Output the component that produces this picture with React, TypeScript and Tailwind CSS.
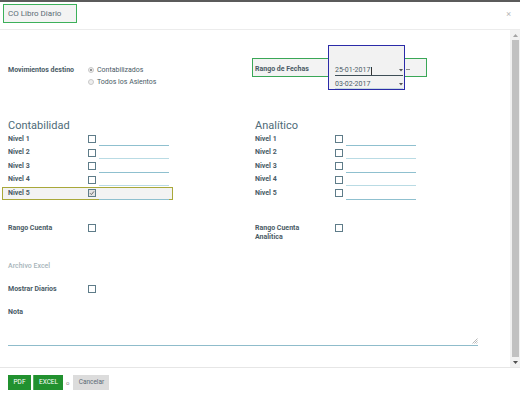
import React from 'react';

const label = 'text-[7px] font-bold text-[#4a5b66]';

const Check = ({ checked = false }: { checked?: boolean }) => (
    <span
        className={`w-[8px] h-[8px] border border-[#5e7c89] flex items-center justify-center shrink-0 ${
            checked ? 'bg-[#e2e2e2]' : 'bg-white'
        }`}
    >
        {checked && (
            <svg width="6" height="6" viewBox="0 0 6 6">
                <path d="M1 3.2 L2.4 4.6 L5 1.4" stroke="#6b6b6b" strokeWidth="1" fill="none" />
            </svg>
        )}
    </span>
);

const Arrow = () => (
    <svg width="4" height="3" viewBox="0 0 4 3" className="shrink-0">
        <path d="M0 0 H4 L2 2.5 Z" fill="#555" />
    </svg>
);

const Radio = ({ checked, text }: { checked?: boolean; text: string }) => (
    <div className="flex items-center h-[12px]">
        <span className="w-[6px] h-[6px] rounded-full border border-[#c9c9c9] bg-[#efefef] flex items-center justify-center">
            {checked && <span className="w-[2px] h-[2px] rounded-full bg-[#777]" />}
        </span>
        <span className="ml-[3px] text-[7px] text-[#4a5b66]">{text}</span>
    </div>
);

const LevelRow = ({ n, highlight = false }: { n: number; highlight?: boolean }) => (
    <div
        className={`flex items-center h-[13.5px] ${
            highlight ? '-ml-[6px] pl-[5px] w-[171px] border border-[#a9a83a] bg-[#f3f3f3]' : ''
        }`}
    >
        <span className={`${label} w-[80px] leading-[9px]`}>Nivel {n}</span>
        <Check checked={highlight} />
        <span className={`ml-[3px] w-[70px] h-[12.5px] border-b ${n % 2 ? 'border-[#8fc0cf]' : 'border-[#b9dbe4]'}`} />
    </div>
);

const Section = ({ title, highlight }: { title: string; highlight?: boolean }) => (
    <div className="flex flex-col">
        <div className="h-[13.5px] text-[11px] leading-[13.5px] text-[#4e6b78]">{title}</div>
        {[1, 2, 3, 4, 5].map((n) => (
            <LevelRow key={n} n={n} highlight={highlight && n === 5} />
        ))}
    </div>
);

const App: React.FC = () => {
    return (
        <div className="w-[520px] h-[397px] bg-white flex flex-col overflow-hidden font-['Roboto',sans-serif]">
            <div className="h-[2px] bg-[#5b5b5b]" />
            <div className="h-[28px] border-b border-[#ececec] flex items-start justify-between">
                <div className="mt-[2px] ml-[3px] w-[74px] h-[19px] border border-[#3cb05a] bg-[#f3f3f3] flex items-center pl-[4px] text-[8px] text-[#5c6c75]">
                    CO Libro Diario
                </div>
                <span className="mt-[6px] mr-[9px] text-[9px] text-[#b8b8b8]">×</span>
            </div>

            <div className="h-[337px] flex">
                <div className="flex-1 flex flex-col pl-[8px]">
                    <div className="mt-[15px] grid grid-cols-[244px_1fr]">
                        <div className="pt-[19px] flex">
                            <span className={`${label} w-[80px] leading-[12px]`}>Movimientos destino</span>
                            <div className="flex flex-col">
                                <Radio checked text="Contabilizados" />
                                <Radio text="Todos los Asientos" />
                            </div>
                        </div>
                        <div className="relative h-[45px]">
                            <div className="mt-[13px] w-[175px] h-[19px] border border-[#3aa757] bg-[#f3f3f3] flex items-end pb-[2px]">
                                <span className={`${label} pl-[2px] w-[77px] leading-[9px]`}>Rango de Fechas</span>
                                <span className="w-[76px]" />
                                <span className="w-[4px] h-px bg-[#8a8a8a] mb-[4px]" />
                            </div>
                            <div className="absolute left-[76px] top-0 w-[77px] h-[45px] border border-[#2b2ba8] bg-[#f2f2f2] flex flex-col pl-[6px] pr-[1px] pt-[20px]">
                                <div className="h-[10px] border-b border-[#3e4e57] flex items-center justify-between text-[7px] leading-[9px] text-[#4a5b66]">
                                    <span className="flex items-center">
                                        25-01-2017
                                        <span className="inline-block w-px h-[8px] bg-[#333] ml-px" />
                                    </span>
                                    <Arrow />
                                </div>
                                <div className="h-[13px] border-b border-[#c5d9df] flex items-center pt-[4px] justify-between text-[7px] leading-[9px] text-[#4a5b66]">
                                    <span>03-02-2017</span>
                                    <Arrow />
                                </div>
                            </div>
                        </div>
                    </div>

                    <div className="mt-[29px] grid grid-cols-[244px_1fr]">
                        <Section title="Contabilidad" highlight />
                        <div className="pl-[3px]">
                            <Section title="Analítico" />
                        </div>
                    </div>

                    <div className="mt-[23.5px] grid grid-cols-[244px_1fr]">
                        <div className="flex items-start">
                            <span className={`${label} w-[80px] leading-[9px]`}>Rango Cuenta</span>
                            <span className="mt-[0.5px]">
                                <Check />
                            </span>
                        </div>
                        <div className="pl-[3px] flex items-start">
                            <span className={`${label} w-[80px] leading-[9px]`}>
                                Rango Cuenta
                                <br />
                                Analítica
                            </span>
                            <span className="mt-[0.5px]">
                                <Check />
                            </span>
                        </div>
                    </div>

                    <div className="mt-[20px] text-[7px] leading-[9px] font-medium text-[#a7b4ba]">Archivo Excel</div>

                    <div className="mt-[14px] flex items-center h-[9px]">
                        <span className={`${label} w-[80px] leading-[9px]`}>Mostrar Diarios</span>
                        <Check />
                    </div>

                    <div className={`mt-[14px] ${label} leading-[9px]`}>Nota</div>

                    <div className="mt-[0.5px] w-[470px] h-[29px] border-b border-[#8fbccb] flex items-end justify-end">
                        <svg width="6" height="6" viewBox="0 0 6 6" className="mb-[1px]">
                            <path d="M0.5 5.5 L5.5 0.5 M2.5 5.5 L5.5 2.5 M4.5 5.5 L5.5 4.5" stroke="#999" strokeWidth="0.7" />
                        </svg>
                    </div>
                </div>

                <div className="w-[10px] bg-[#f1f1f1] flex flex-col items-center">
                    <div className="h-[10px] flex items-center justify-center">
                        <svg width="5" height="3" viewBox="0 0 5 3">
                            <path d="M0 3 H5 L2.5 0 Z" fill="#a3a3a3" />
                        </svg>
                    </div>
                    <div className="w-[7px] flex-1 bg-[#c1c1c1]" />
                    <div className="h-[10px] flex items-center justify-center">
                        <svg width="5" height="3" viewBox="0 0 5 3">
                            <path d="M0 0 H5 L2.5 3 Z" fill="#505050" />
                        </svg>
                    </div>
                </div>
            </div>

            <div className="h-[30px] border-t border-[#e6e6e6] flex items-start pt-[7px] pl-[8px]">
                <button className="w-[23px] h-[15px] bg-[#21912f] text-white text-[6.5px]">PDF</button>
                <button className="ml-[2px] w-[30px] h-[15px] bg-[#21912f] border-l border-[#56ad61] text-white text-[6.5px]">
                    EXCEL
                </button>
                <span className="ml-[3px] h-[15px] leading-[15px] text-[6px] text-[#888]">o</span>
                <button className="ml-[4px] w-[36px] h-[15px] bg-[#dcdcdc] text-[#5a6a73] text-[6.5px]">Cancelar</button>
            </div>
        </div>
    );
};

export default App;
